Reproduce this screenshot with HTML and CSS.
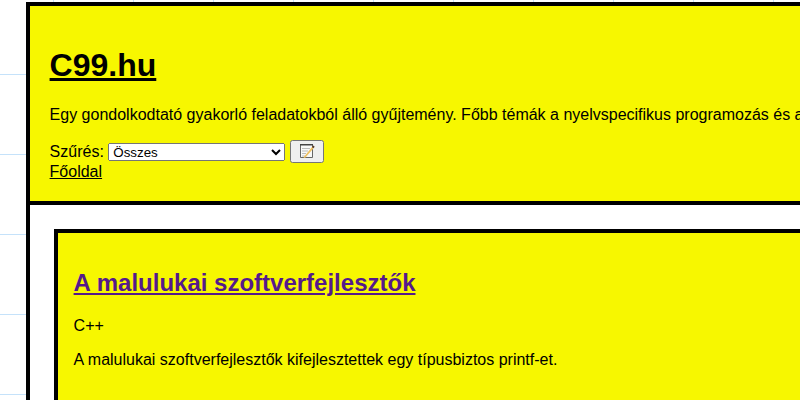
FILE: index.html
```html
<!DOCTYPE html>
<html lang="hu">
<head>
  <meta charset="UTF-8">
  <meta name="viewport" content="width=device-width, initial-scale=1.0">
  <title>C99.hu</title>
  <link rel="stylesheet" href="styles.css">
</head>
<body>
  <div class="page">
    <header class="site-header">
      <h1><a href="#">C99.hu</a></h1>
      <p>Egy gondolkodtató gyakorló feladatokból álló gyűjtemény. Főbb témák a nyelvspecifikus programozás és a szoftverfejlesztés.</p>
      <form class="filter">
        <label for="filter-select">Szűrés:</label>
        <select id="filter-select">
          <option>Összes</option>
        </select>
        <button type="button" aria-label="Szűrés">
          <svg width="16" height="16" viewBox="0 0 16 16">
            <path d="M1.500 1.500h12v13h-12z" fill="#f8f8f8" stroke="#666"/>
            <path d="M1 1h13v1.500H1z" fill="#444"/>
            <path d="M3 5h8v1H3zM3 7.500h6v1H3zM3 10h4v1H3zM3 12.500h3v1H3z" fill="#bbb"/>
            <path d="M4.500 14.500L13 4l1.500 1.200L6 15z" fill="#f0c060"/>
            <path d="M13 4l1.200-1.500 1.500 1.200-1.200 1.500z" fill="#5a3a22"/>
          </svg>
        </button>
      </form>
      <a href="#">Főoldal</a>
    </header>
    <main class="content">
      <article class="card">
        <h2><a href="#">A malulukai szoftverfejlesztők</a></h2>
        <p>C++</p>
        <p>A malulukai szoftverfejlesztők kifejlesztettek egy típusbiztos printf-et.</p>
      </article>
    </main>
  </div>
</body>
</html>
```

FILE: styles.css
```css
html {
  height: 100%;
  overflow: hidden;
}

body {
  margin: 0;
  height: 100%;
  overflow: hidden;
  font-family: "Liberation Sans", Arial, sans-serif;
  font-size: 16px;
  color: #000;
  background-color: #fff;
  background-image:
    linear-gradient(to right, #c5e2fa 1px, transparent 1px),
    linear-gradient(to bottom, #c5e2fa 1px, transparent 1px);
  background-size: 80px 80px;
  background-position: 53px 0, 0 74px;
}

a {
  color: #000;
}

.page {
  width: 1400px;
  margin: 2px 0 0 25.6px;
  border: 4px solid #000;
  background-color: #fff;
}

.site-header {
  padding: 20px;
  background-color: #f7f700;
  border-bottom: 4px solid #000;
}

.site-header h1 {
  margin: 21.44px 0;
  font-size: 32px;
}

.site-header p {
  margin: 16px 0;
}

.filter select {
  width: 177px;
  height: 18px;
  padding: 0;
  font-family: "Liberation Sans", Arial, sans-serif;
  font-size: 13.33px;
}

.filter button {
  width: 34px;
  height: 23px;
  padding: 0;
  vertical-align: -4px;
}

.filter button svg {
  display: block;
  margin: 0 auto;
}

.content {
  padding: 24px;
}

.card {
  padding: 16px;
  height: 600px;
  background-color: #f7f700;
  border: 4px solid #000;
}

.card h2 {
  margin: 19.92px 0;
  font-size: 24px;
}

.card h2 a {
  color: #551a8b;
}

.card p {
  margin: 16px 0;
}
```
